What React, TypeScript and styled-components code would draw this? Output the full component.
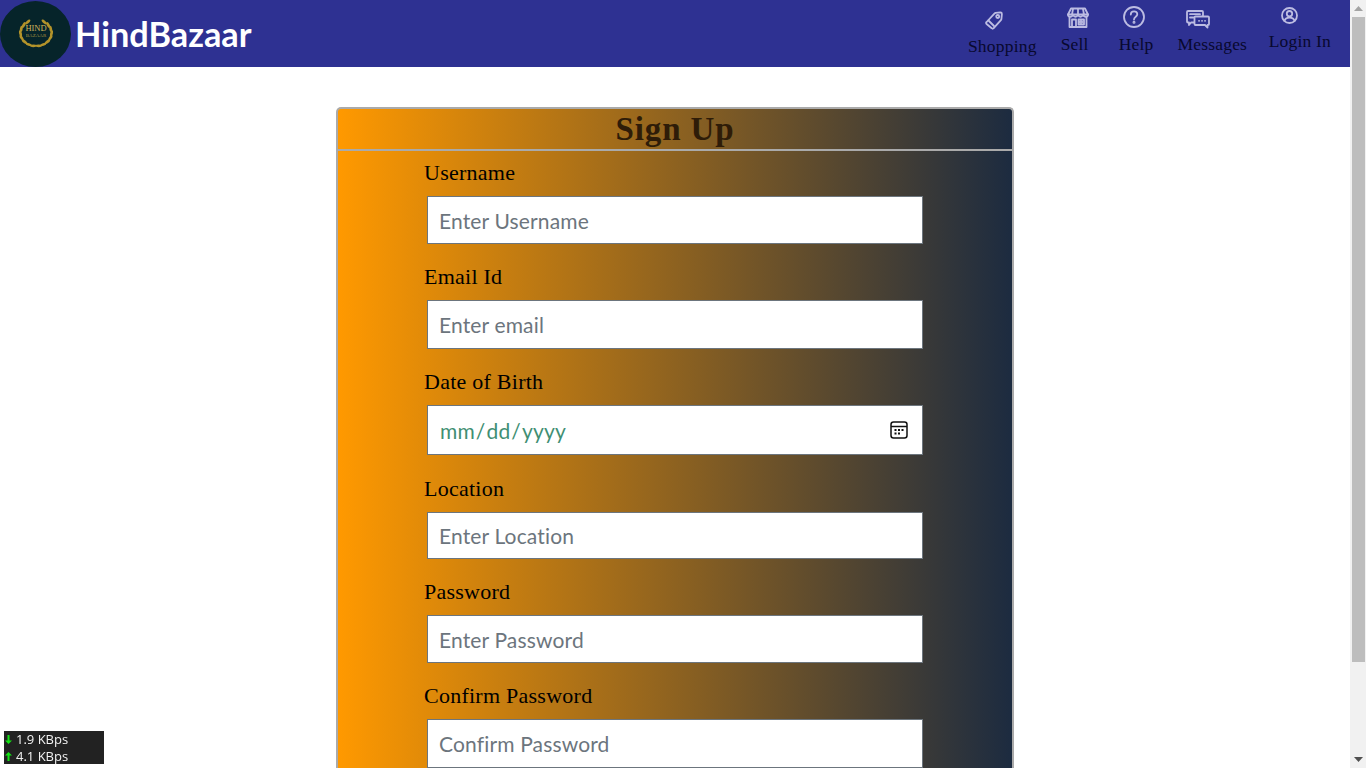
import * as React from "react";
import styled, { createGlobalStyle } from "styled-components";

const serif = `"Liberation Serif", "DejaVu Serif", serif`;
const hand = `"Lato", "Noto Sans", sans-serif`;

const GlobalStyle = createGlobalStyle`
  html, body {
    margin: 0;
    background: #fff;
    font-family: ${serif};
    overflow-x: hidden;
  }
  #root {
    width: 1350px;
  }
`;

const Header = styled.header`
  height: 67px;
  background: #2e3192;
  display: flex;
  align-items: flex-start;
`;

const Brand = styled.div`
  display: flex;
  align-items: center;
  height: 67px;
  gap: 4px;
`;

const LogoBadge = styled.div`
  width: 71px;
  height: 66px;
  border-radius: 50%;
  background: #06242a;
  display: flex;
  align-items: center;
  justify-content: center;
`;

const BrandName = styled.span`
  color: #fff;
  font-family: ${hand};
  font-weight: 700;
  font-size: 34.3px;
`;

const Nav = styled.nav`
  margin-left: auto;
  margin-right: 19px;
  display: flex;
  align-items: flex-start;
`;

const NavItem = styled.a<{ $top: number; $gap: number; $drop: number }>`
  display: flex;
  flex-direction: column;
  align-items: center;
  row-gap: ${(p) => p.$drop}px;
  margin-left: ${(p) => p.$gap}px;
  padding-top: ${(p) => p.$top}px;
  color: #08082e;
  font-size: 17.5px;
  letter-spacing: 0.2px;
  line-height: 20px;
  white-space: nowrap;
`;

const NavIcon = styled.svg<{ $nudge?: number }>`
  display: block;
  margin-left: ${(p) => p.$nudge ?? 0}px;
  fill: none;
  stroke: #bcbce2;
  stroke-width: 1.8;
  stroke-linejoin: round;
  stroke-linecap: round;
`;

const Card = styled.form`
  width: 678.6px;
  box-sizing: border-box;
  margin: 40px auto 0;
  border: 2px solid #aaaaaa;
  border-bottom: 0;
  border-radius: 5px 5px 0 0;
  background: linear-gradient(to right, #ff9900, #1c2b40);
`;

const CardTitle = styled.h1`
  margin: 0;
  height: 40px;
  border-bottom: 2px solid #aaaaaa;
  text-align: center;
  font-size: 33px;
  line-height: 41px;
  font-weight: 700;
  color: #2e1c08;
  letter-spacing: 0.9px;
`;

const Fields = styled.div`
  width: 502px;
  margin: 0 auto;
  padding-top: 10px;
`;

const Field = styled.div<{ $after: number }>`
  margin-bottom: ${(p) => p.$after}px;
`;

const Label = styled.label`
  display: block;
  height: 35px;
  font-size: 22px;
  letter-spacing: 0.25px;
  line-height: 23px;
  color: #000;
`;

const InputWrap = styled.div`
  position: relative;
  width: 496px;
  margin-left: 3px;
`;

const Input = styled.input<{ $h: number }>`
  display: block;
  box-sizing: border-box;
  width: 100%;
  height: ${(p) => p.$h}px;
  padding: 0 11px;
  border: 1px solid #6c757d;
  border-radius: 0;
  outline: none;
  background: #fff;
  font-family: ${hand};
  font-size: 21px;
  letter-spacing: 0.15px;
  color: #3f8f73;

  &::placeholder {
    color: #6c757d;
    opacity: 1;
  }

  &::-webkit-calendar-picker-indicator {
    opacity: 0;
  }
`;

const CalendarGlyph = styled.svg`
  position: absolute;
  right: 14px;
  top: 15px;
  fill: none;
  stroke: #111;
  stroke-width: 1.5;
`;

const SpeedMeter = styled.aside`
  position: fixed;
  left: 4px;
  bottom: 4px;
  width: 100px;
  height: 33px;
  background: #222;
  color: #f2f2f2;
  font-family: "Open Sans", "Noto Sans", sans-serif;
  font-size: 13px;
  line-height: 17px;
`;

const SpeedRow = styled.div`
  display: flex;
  align-items: center;
  gap: 4px;
  padding-left: 1px;
`;

const SpeedArrow = styled.svg`
  fill: #12e312;
`;

const FakeScrollbar = styled.div`
  position: fixed;
  top: 0;
  right: 0;
  bottom: 0;
  width: 16px;
  display: flex;
  flex-direction: column;
  background: #f1f1f1;
`;

const ScrollArrow = styled.div`
  height: 17px;
  padding-left: 1px;
  display: flex;
  align-items: center;
  justify-content: center;
`;

const ScrollThumb = styled.div`
  height: 645px;
  margin: 0 1px 0 2px;
  background: #bdbdbd;
`;

const ScrollGap = styled.div`
  flex: 1;
`;

const Wreath = () => {
  const angles = [-58, -38, -18, 2, 22, 42, 62, 80];
  return (
    <svg width="40" height="32" viewBox="0 0 40 32">
      {angles.map((deg) => {
        const a = deg * (Math.PI / 180);
        const x = 15.5 * Math.cos(a);
        const y = 13 * Math.sin(a);
        return (
          <g key={deg} fill="#b3932a">
            <ellipse cx={20 + x} cy={15 + y} rx="1.4" ry="3.2" transform={`rotate(${deg + 10} ${20 + x} ${15 + y})`} />
            <ellipse cx={20 - x} cy={15 + y} rx="1.4" ry="3.2" transform={`rotate(${-deg - 10} ${20 - x} ${15 + y})`} />
          </g>
        );
      })}
      <text x="20" y="13" textAnchor="middle" fontFamily="Liberation Serif, serif" fontSize="8.500" fill="#cdb25a">HIND</text>
      <text x="20" y="19" textAnchor="middle" fontFamily="Liberation Serif, serif" fontSize="5" fill="#a8913f">BAZAAR</text>
    </svg>
  );
};

const TagIcon = () => (
  <NavIcon width="18" height="19" viewBox="0 0 18 19" $nudge={-16}>
    <path d="M10.600 1.800 15.400 1.400c.9 0 1.500.6 1.500 1.500l-.5 5.200c0 .5-.2.8-.5 1.100l-7.200 8c-.6.6-1.400.6-2 0L1.600 13c-.6-.6-.6-1.400 0-2l8-8.600c.3-.3.6-.5 1-.6z" />
    <circle cx="12.700" cy="5.500" r="1.500" />
    <path d="m3.500 9.500 5.500 5.500" />
  </NavIcon>
);

const StoreIcon = () => (
  <NavIcon width="22" height="21" viewBox="0 0 22 21" $nudge={6}>
    <path d="M4 1.500h14l3 6H1z" />
    <path d="M1 7.500c0 3 4 3 5 0 1 3 4 3 5 0 1 3 4 3 5 0 1 3 5 3 5 0M6 2 5 7.500M11 2v5.500M16 2l1 5.500" />
    <path d="M2.500 10.500v9.500h17v-9.500" />
    <path d="M5 20v-7.500h4V20M11.500 12.500h5.500v5h-5.500z" />
    <circle cx="14" cy="15" r="1.200" />
  </NavIcon>
);

const HelpIcon = () => (
  <NavIcon width="22" height="22" viewBox="0 0 22 22" $nudge={-4}>
    <circle cx="11" cy="11" r="10" />
    <path d="M7.800 8.500c0-4.200 6.500-4.200 6.500-.2 0 2.500-3.300 2.500-3.300 5.200" />
    <circle cx="11" cy="16.300" r=".6" />
  </NavIcon>
);

const MessagesIcon = () => (
  <NavIcon width="24" height="19" viewBox="0 0 24 19" $nudge={-28}>
    <path d="M8 12.500H5l-2 2.500v-2.500H2c-.6 0-1-.4-1-1V2c0-.6.4-1 1-1h14c.6 0 1 .4 1 1v4" />
    <path d="M10 6.500h12c.6 0 1 .4 1 1v6.500c0 .6-.4 1-1 1h-.5v2.500l-2.500-2.500h-9.500c-.6 0-1-.4-1-1V7.500c0-.6.4-1 1-1z" />
    <path d="M4 4.200h10M4 7.500h3.500M13 10.800h.1M16 10.800h.1M19 10.800h.1" />
  </NavIcon>
);

const UserIcon = () => (
  <NavIcon width="17" height="17" viewBox="0 0 17 17" $nudge={-20}>
    <circle cx="8.500" cy="8.500" r="7.500" />
    <circle cx="8.500" cy="6.700" r="2.700" />
    <path d="M3.500 14c.5-2.500 2.500-3.300 5-3.300s4.500.8 5 3.300" />
  </NavIcon>
);

const navItems = [
  { label: "Shopping", top: 11, gap: 0, drop: 6, icon: <TagIcon /> },
  { label: "Sell", top: 7, gap: 24, drop: 6, icon: <StoreIcon /> },
  { label: "Help", top: 6, gap: 30, drop: 6, icon: <HelpIcon /> },
  { label: "Messages", top: 10, gap: 24, drop: 5, icon: <MessagesIcon /> },
  { label: "Login In", top: 7, gap: 21.5, drop: 7, icon: <UserIcon /> },
];

const fields = [
  { label: "Username", type: "text", placeholder: "Enter Username", h: 48, after: 21 },
  { label: "Email Id", type: "email", placeholder: "Enter email", h: 49, after: 21 },
  { label: "Date of Birth", type: "date", placeholder: "", h: 50, after: 22 },
  { label: "Location", type: "text", placeholder: "Enter Location", h: 47, after: 21 },
  { label: "Password", type: "password", placeholder: "Enter Password", h: 48, after: 21 },
  { label: "Confirm Password", type: "password", placeholder: "Confirm Password", h: 49, after: 21 },
];

export default function App() {
  return (
    <>
      <GlobalStyle />
      <Header>
        <Brand>
          <LogoBadge>
            <Wreath />
          </LogoBadge>
          <BrandName>HindBazaar</BrandName>
        </Brand>
        <Nav>
          {navItems.map((item) => (
            <NavItem key={item.label} $top={item.top} $gap={item.gap} $drop={item.drop}>
              {item.icon}
              {item.label}
            </NavItem>
          ))}
        </Nav>
      </Header>
      <Card>
        <CardTitle>Sign Up</CardTitle>
        <Fields>
          {fields.map((f) => (
            <Field key={f.label} $after={f.after}>
              <Label>{f.label}</Label>
              <InputWrap>
                <Input $h={f.h} type={f.type} placeholder={f.placeholder} />
                {f.type === "date" && (
                  <CalendarGlyph width="20" height="20" viewBox="0 0 20 20">
                    <rect x="2" y="2" width="16" height="16" rx="2.500" />
                    <path d="M2 6.500h16" />
                    <path d="M5.500 10h2M9 10h2M12.500 10h2M5.500 13.500h2M9 13.500h2" strokeWidth="2" />
                  </CalendarGlyph>
                )}
              </InputWrap>
            </Field>
          ))}
        </Fields>
      </Card>
      <SpeedMeter>
        <SpeedRow>
          <SpeedArrow width="7" height="11" viewBox="0 0 7 11">
            <path d="M2.500 1h2v5.500H7L3.500 10 0 6.500h2.500z" />
          </SpeedArrow>
          1.9 KBps
        </SpeedRow>
        <SpeedRow>
          <SpeedArrow width="7" height="11" viewBox="0 0 7 11">
            <path d="M2.500 10h2V4.500H7L3.500 1 0 4.500h2.500z" />
          </SpeedArrow>
          4.1 KBps
        </SpeedRow>
      </SpeedMeter>
      <FakeScrollbar>
        <ScrollArrow>
          <svg width="9" height="5" viewBox="0 0 9 5">
            <path d="M4.500 0 9 5H0z" fill="#a3a3a3" />
          </svg>
        </ScrollArrow>
        <ScrollThumb />
        <ScrollGap />
        <ScrollArrow>
          <svg width="9" height="5" viewBox="0 0 9 5">
            <path d="M0 0h9L4.500 5z" fill="#505050" />
          </svg>
        </ScrollArrow>
      </FakeScrollbar>
    </>
  );
}
